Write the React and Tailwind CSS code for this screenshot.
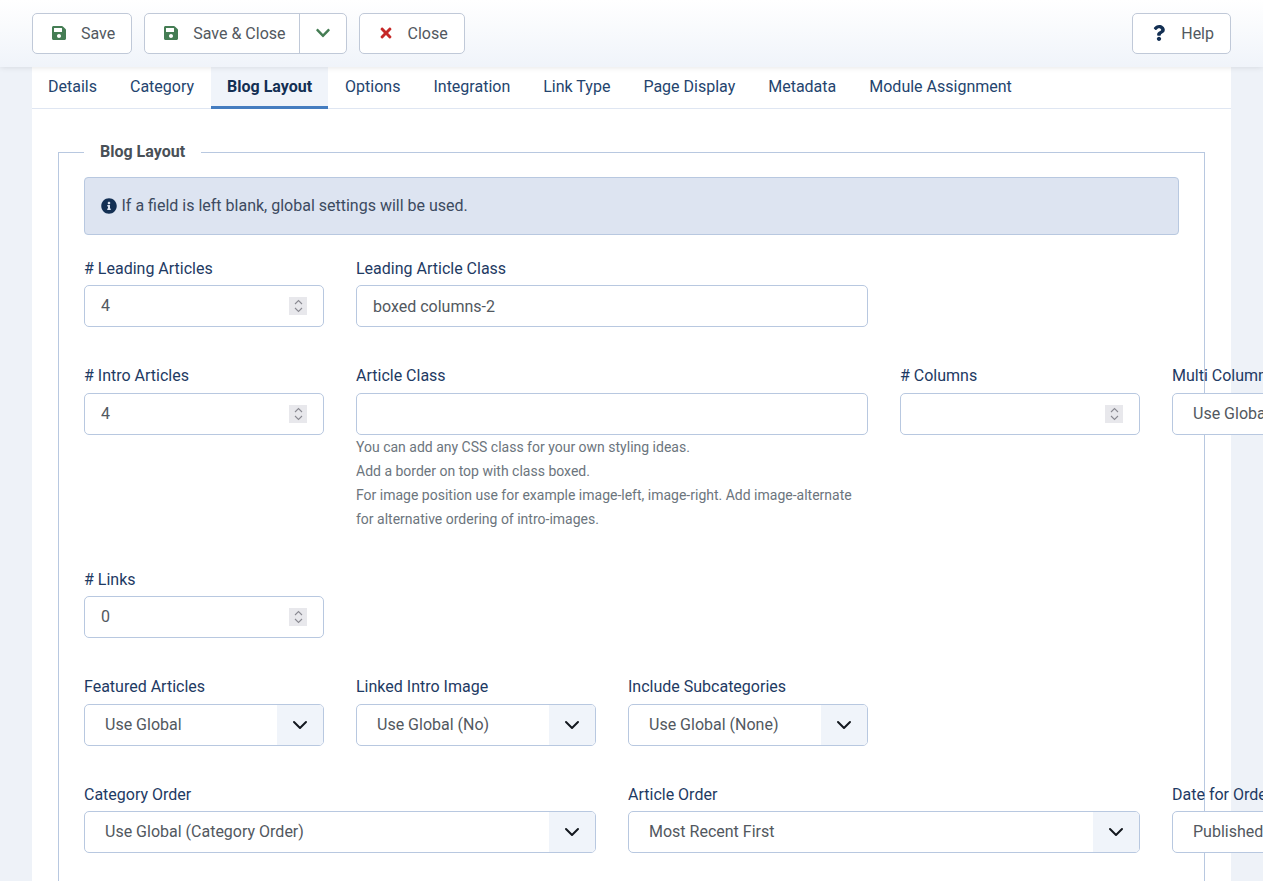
import React from 'react';
import { FaSave, FaTimes, FaQuestion, FaChevronDown, FaInfoCircle } from 'react-icons/fa';

const tabs = ['Details', 'Category', 'Blog Layout', 'Options', 'Integration', 'Link Type', 'Page Display', 'Metadata', 'Module Assignment'];

function ToolbarButton({ icon, label, className = '' }) {
  return (
    <button className={`h-[41px] flex items-center gap-[14px] pl-[18px] pr-[16px] bg-white border border-[#c0c9d8] rounded-[5px] text-[#525860] ${className}`}>
      {icon}
      <span className="pt-[2px]">{label}</span>
    </button>
  );
}

function Field({ label, width, children }) {
  return (
    <div className={`shrink-0 ${width}`}>
      <label className="block h-6 leading-6 mb-[4.5px] text-[#1e3a63] whitespace-nowrap">{label}</label>
      {children}
    </div>
  );
}

function Spinner() {
  return (
    <span className="w-[18px] h-[18px] bg-[#e8e8ec] flex items-center justify-center shrink-0">
      <svg width="9" height="14" viewBox="0 0 9 14" fill="none" stroke="#8a8a92" strokeWidth="1.1">
        <path d="M1 5l3.5-3.5L8 5" />
        <path d="M1 9l3.5 3.5L8 9" />
      </svg>
    </span>
  );
}

function NumberInput({ value }) {
  return (
    <div className="h-[42px] flex items-center pl-[16px] pr-[16px] bg-white border border-[#b8c8e0] rounded-[5px]">
      <input readOnly value={value} className="flex-1 w-0 outline-none text-[#525860]" />
      <Spinner />
    </div>
  );
}

function TextInput({ value = '' }) {
  return (
    <input readOnly value={value} className="block w-full h-[42px] px-[16px] bg-white border border-[#b8c8e0] rounded-[5px] outline-none text-[#525860]" />
  );
}

function Select({ value }) {
  return (
    <div className="h-[42px] flex bg-white border border-[#b8c8e0] rounded-[5px] overflow-hidden">
      <span className="flex-1 pl-[20px] leading-[39px] text-[#525860] whitespace-nowrap overflow-hidden">{value}</span>
      <span className="w-[46px] shrink-0 bg-[#f0f4fa] flex items-center justify-center pr-px">
        <svg width="16" height="10" viewBox="0 0 16 10" fill="none" stroke="#14181f" strokeWidth="2" strokeLinecap="round" strokeLinejoin="round">
          <path d="M2 2l6 6 6-6" />
        </svg>
      </span>
    </div>
  );
}

export default function App() {
  return (
    <div className="h-[881px] overflow-hidden bg-[#eef2f8] font-['Roboto',sans-serif] text-base">
      <header className="relative z-10 h-[67px] px-8 flex items-center pb-[1px] bg-gradient-to-b from-white to-[#f0f4fa] shadow-[0_0_6px_rgba(0,0,0,0.12)]">
        <div className="flex gap-3">
          <ToolbarButton label="Save" icon={<FaSave className="text-[#457d54] text-[16px]" />} />
          <div className="h-[41px] flex bg-white border border-[#c0c9d8] rounded-[5px] text-[#525860]">
            <button className="flex items-center gap-[14px] pl-[18px] pr-[13px] border-r border-[#c0c9d8]">
              <FaSave className="text-[#457d54] text-[16px]" />
              <span className="pt-[2px]">Save &amp; Close</span>
            </button>
            <button className="w-[46px] flex items-center justify-center">
              <FaChevronDown className="text-[#457d54] text-[16px]" />
            </button>
          </div>
          <ToolbarButton label="Close" icon={<FaTimes className="text-[#c52827] text-[16px]" />} />
        </div>
        <ToolbarButton label="Help" className="ml-auto" icon={<FaQuestion className="text-[#132f53] text-[16px]" />} />
      </header>

      <main className="mx-8 bg-white">
        <nav className="flex gap-px h-[42px] border-b border-[#dfe6f2]">
          {tabs.map((tab) => (
            <div
              key={tab}
              className={
                tab === 'Blog Layout'
                  ? 'px-4 h-[42px] leading-[39px] font-bold text-[#132f53] bg-[#f0f4fa] border-b-[3px] border-[#457dc0]'
                  : 'px-4 h-[41px] leading-[39px] text-[#24446e]'
              }
            >
              {tab}
            </div>
          ))}
        </nav>

        <div className="pt-[31px] pl-[26px]">
          <fieldset className="w-[1147px] min-w-0 px-[25px] border border-[#b8c8e0]">
            <legend className="px-4 leading-6 font-bold text-[#495057]">Blog Layout</legend>

            <div className="h-[58px] mt-[13px] mb-[21.5px] flex items-center gap-[4.5px] px-[16px] bg-[#dde4f1] border border-[#b8c8e0] rounded-[4px] text-[#3c4a60]">
              <FaInfoCircle className="text-[#132f53] text-[16px]" />
              <span>If a field is left blank, global settings will be used.</span>
            </div>

            <div className="flex flex-col gap-[37px] pb-[36px]">
              <div className="flex gap-8">
                <Field label="# Leading Articles" width="w-[240px]"><NumberInput value="4" /></Field>
                <Field label="Leading Article Class" width="w-[512px]"><TextInput value="boxed columns-2" /></Field>
              </div>

              <div className="flex gap-8 items-start">
                <Field label="# Intro Articles" width="w-[240px]"><NumberInput value="4" /></Field>
                <Field label="Article Class" width="w-[512px]">
                  <TextInput />
                  <div className="text-sm leading-6 text-[#6c757d]">
                    <p>You can add any CSS class for your own styling ideas.</p>
                    <p>Add a border on top with class boxed.</p>
                    <p>For image position use for example image-left, image-right. Add image-alternate for alternative ordering of intro-images.</p>
                  </div>
                </Field>
                <Field label="# Columns" width="w-[240px]"><NumberInput value="" /></Field>
                <Field label="Multi Column Order" width="w-[240px]"><Select value="Use Global" /></Field>
              </div>

              <div className="flex gap-8">
                <Field label="# Links" width="w-[240px]"><NumberInput value="0" /></Field>
              </div>

              <div className="flex gap-8">
                <Field label="Featured Articles" width="w-[240px]"><Select value="Use Global" /></Field>
                <Field label="Linked Intro Image" width="w-[240px]"><Select value="Use Global (No)" /></Field>
                <Field label="Include Subcategories" width="w-[240px]"><Select value="Use Global (None)" /></Field>
              </div>

              <div className="flex gap-8">
                <Field label="Category Order" width="w-[512px]"><Select value="Use Global (Category Order)" /></Field>
                <Field label="Article Order" width="w-[512px]"><Select value="Most Recent First" /></Field>
                <Field label="Date for Ordering" width="w-[240px]"><Select value="Published" /></Field>
              </div>
            </div>
          </fieldset>
        </div>
      </main>
    </div>
  );
}
